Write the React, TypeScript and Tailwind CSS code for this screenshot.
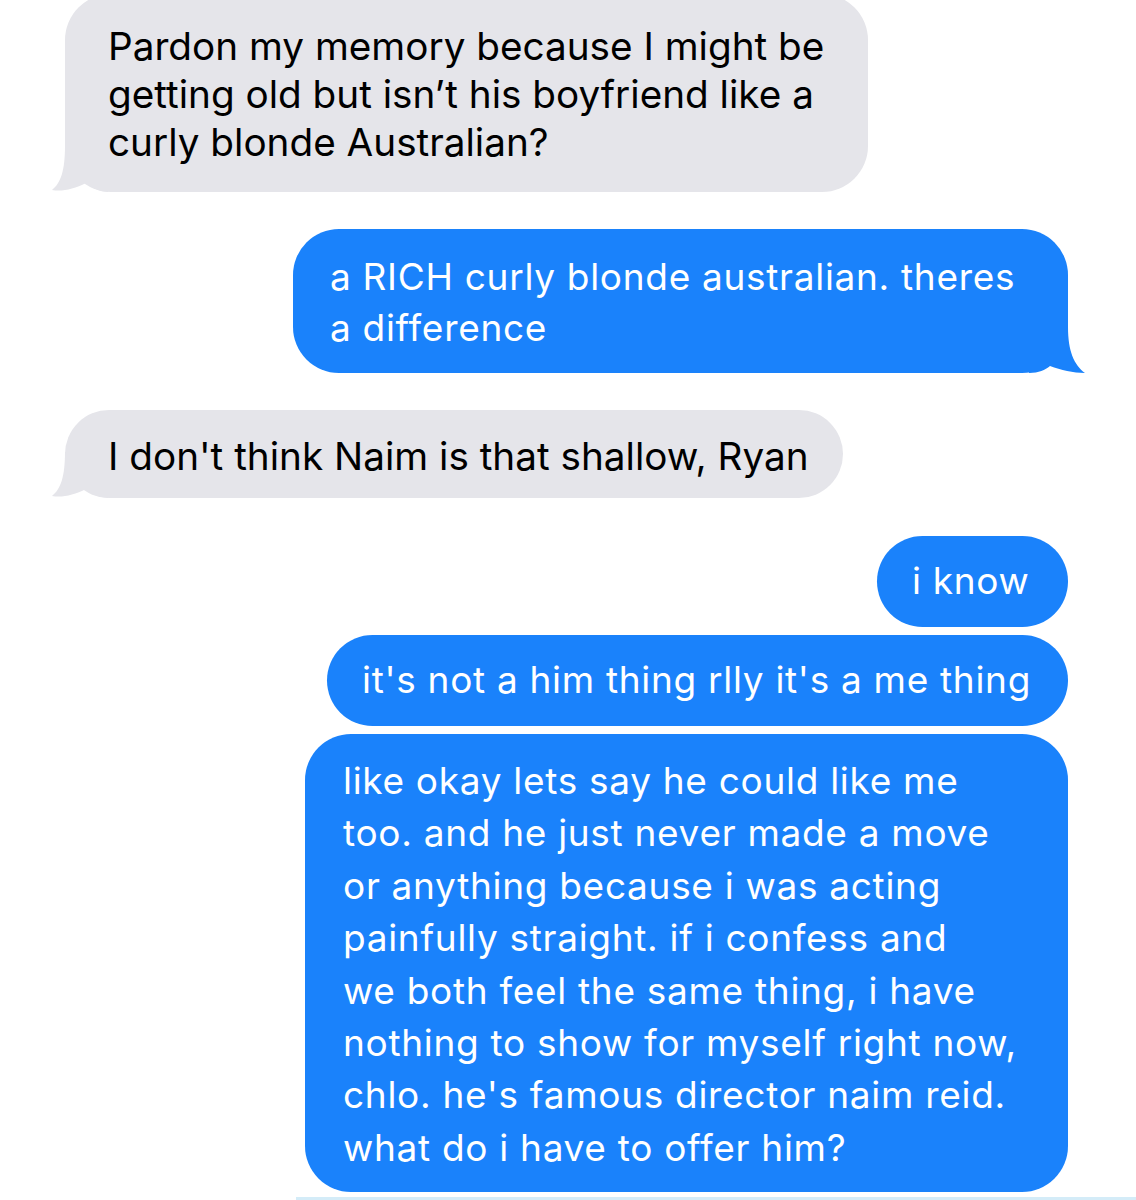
import React from 'react';

const GRAY = '#e5e5ea';
const BLUE = '#1a82fb';

function TailLeft() {
  return (
    <svg className="absolute left-[-13px] bottom-0" width="56" height="46" viewBox="0 0 56 46">
      <path d="M13 0 C13 24 9 37 0 44 C10 46 22 43 34 37 C40 42 46 45 56 46 L56 0 Z" fill={GRAY} />
    </svg>
  );
}

function TailRight() {
  return (
    <svg className="absolute right-[-17px] bottom-0" width="56" height="46" viewBox="0 0 56 46">
      <path d="M39 0 C39 24 45 38 56 46 C44 46 32 43 21 39 C16 43 10 46 0 46 L0 0 Z" fill={BLUE} />
    </svg>
  );
}

function Gray({ lines, className, tail }: { lines: string[]; className: string; tail?: boolean }) {
  return (
    <div className={`relative self-start ml-[65px] rounded-[46px] bg-[#e5e5ea] text-black text-[38.7px] ${className}`}>
      {lines.map((l) => (
        <div key={l} className="relative whitespace-nowrap">{l}</div>
      ))}
      {tail && <TailLeft />}
    </div>
  );
}

function Blue({ lines, className, tail }: { lines: string[]; className: string; tail?: boolean }) {
  return (
    <div className={`relative self-end mr-[68px] rounded-[46px] bg-[#1a82fb] text-white text-[37px] tracking-[0.7px] ${className}`}>
      {lines.map((l) => (
        <div key={l} className="relative whitespace-nowrap">{l}</div>
      ))}
      {tail && <TailRight />}
    </div>
  );
}

export default function App() {
  return (
    <div
      className="w-[1136px] h-[1200px] overflow-hidden bg-white flex flex-col"
      style={{ fontFamily: 'Inter, "Liberation Sans", Arial, sans-serif' }}
    >
      <Gray
        tail
        className="mt-[-6px] w-[803px] pl-[43px] pt-[28px] pb-[26px] leading-[48px]"
        lines={[
          'Pardon my memory because I might be',
          'getting old but isn\u2019t his boyfriend like a',
          'curly blonde Australian?',
        ]}
      />

      <Blue
        tail
        className="mt-[37px] w-[775px] pl-[37px] pt-[22px] pb-[20px] leading-[51px]"
        lines={['a RICH curly blonde australian. theres', 'a difference']}
      />

      <Gray
        tail
        className="mt-[37px] w-[778px] pl-[43px] pt-[22px] pb-[18px] leading-[48px]"
        lines={["I don't think Naim is that shallow, Ryan"]}
      />

      <Blue
        className="mt-[38px] w-[191px] pl-[35px] pt-[21px] pb-[22px] leading-[48px]"
        lines={['i know']}
      />

      <Blue
        className="mt-[8px] w-[741px] pl-[35px] pt-[21px] pb-[22px] leading-[48px]"
        lines={["it's not a him thing rlly it's a me thing"]}
      />

      <Blue
        className="mt-[8px] w-[763px] pl-[38px] pt-[21px] pb-[18px] leading-[52.4px]"
        lines={[
          'like okay lets say he could like me',
          'too. and he just never made a move',
          'or anything because i was acting',
          'painfully straight. if i confess and',
          'we both feel the same thing, i have',
          'nothing to show for myself right now,',
          "chlo. he's famous director naim reid.",
          'what do i have to offer him?',
        ]}
      />

      <div className="mt-[5px] ml-[296px] h-[4px] bg-[#d4ecf8]" />
    </div>
  );
}
